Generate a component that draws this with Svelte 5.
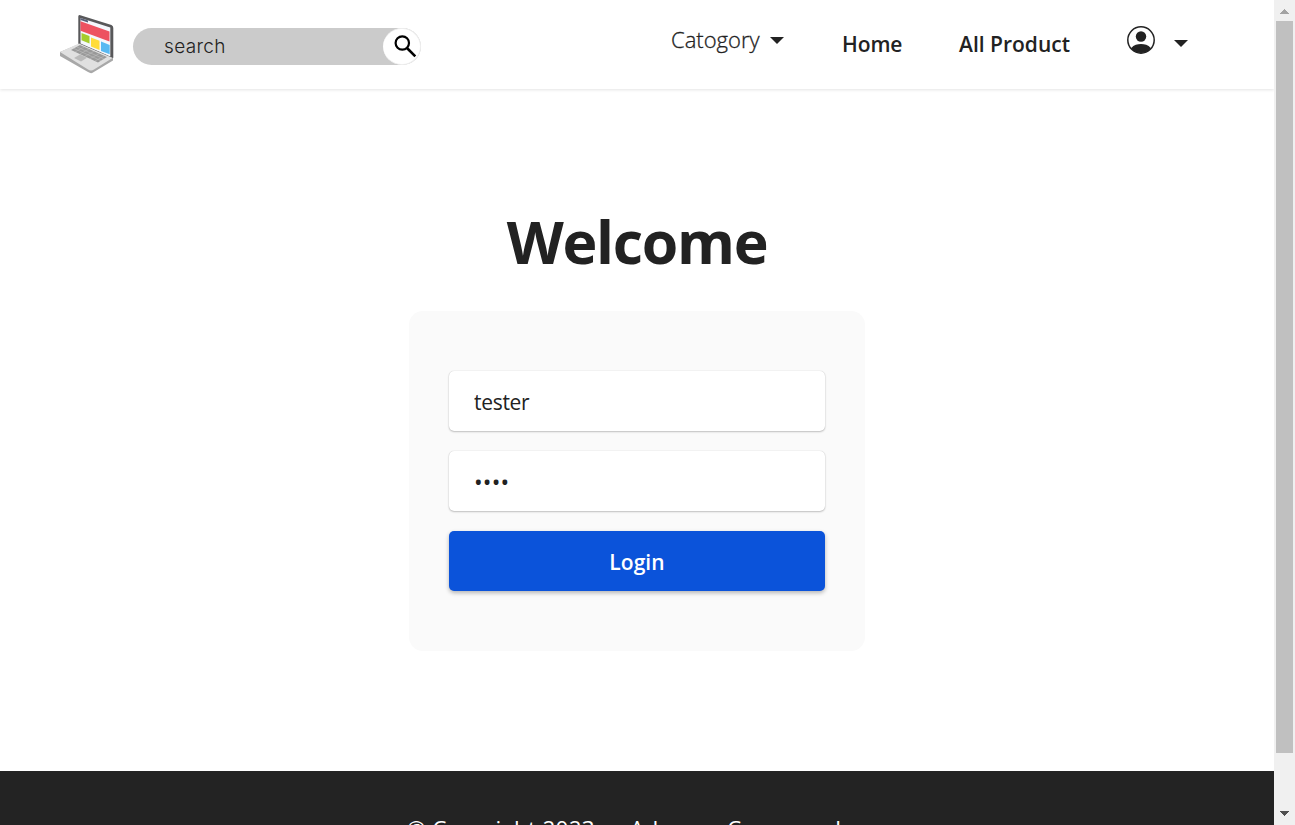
<script>
  let username = $state('tester');
  let password = $state('1234');
</script>

<div class="window">
  <div class="page">
    <header>
      <svg class="logo" viewBox="0 0 56 62" aria-label="Laptop">
        <path d="M18.3 2.5 Q18.3 .3 20.3 1.2 L51.5 11 Q53.3 12 53.3 14 L53.3 43.5 Q53 45.5 51 44.5 L18.3 31Z" fill="#58585a" />
        <path d="M20.5 4 L50.3 13.6 L50.3 42.5 L20.5 29.6Z" fill="#f4f7fc" />
        <path d="M20.5 4 L28 6.4 L28 8.5 L20.5 6Z" fill="#596078" />
        <path d="M20.5 7.2 L49.5 17.5 L49.5 27.5 L20.5 16.8Z" fill="#ed5260" />
        <path d="M21.5 19 L29.5 22 L29.5 29.5 L21.5 26.3Z" fill="#a5cd2d" />
        <path d="M31 23.5 L39.5 26.7 L39.5 36 L31 32.5Z" fill="#ffdc3b" />
        <path d="M41 27.6 L49.7 31 L49.7 40.3 L41 37Z" fill="#58b9f2" />
        <path d="M0 38 L19 30 L53 44 L53 46.5 L33 58.5 Q31 60 28 58 L0 42Z" fill="#a8a8a8" />
        <path d="M0 38 L19 29.5 L52.5 44 L34 55.5 Q31 57.5 28 55.5Z" fill="#e0e0e0" />
        <path d="M20 31 L47 43 L38 48.5 L11 36Z" fill="#999" />
        <path d="M17 33 L44 45 M14 34.5 L41 46.7 M24 33 L15 38 M29 35 L20 40 M34 37.3 L25 42.3 M39 39.7 L30 44.7 M44 42 L35 47" stroke="#c4c4c4" stroke-width=".5" />
        <path d="M20 40.5 L27 43.8 L21 47.5 L14 44Z" fill="#bababa" />
      </svg>
      <form class="search" onsubmit={(event) => event.preventDefault()}>
        <input placeholder="search" aria-label="search" />
        <button aria-label="Submit search">
          <svg viewBox="0 0 24 24" width="24" height="24" fill="none" stroke="#000" stroke-width="2.2">
            <circle cx="9.3" cy="9" r="6.7" /><path d="m14 14 8.3 8.3" stroke-width="2.6" />
          </svg>
        </button>
      </form>
      <nav>
        <a class="category" href="#category"><span>Catogory</span><i class="caret"></i></a>
        <a class="home" href="#home">Home</a>
        <a class="products" href="#products">All Product</a>
        <a class="account" href="#account" aria-label="Account">
          <svg viewBox="0 0 28 28" width="28" height="28">
            <circle cx="14" cy="14" r="13.2" fill="none" stroke="#222" stroke-width="1.5" />
            <circle cx="14" cy="10.5" r="5.2" fill="#222" />
            <path d="M4 22.2 C7 18.8 10.5 18 14 18 S21 18.8 24 22.2 A13 13 0 0 1 4 22.2Z" fill="#222" />
          </svg>
          <i class="caret"></i>
        </a>
      </nav>
    </header>
    <main>
      <h1>Welcome</h1>
      <form class="card" onsubmit={(event) => event.preventDefault()}>
        <input class="field" bind:value={username} aria-label="Username" />
        <input class="field password" type="password" bind:value={password} aria-label="Password" />
        <button class="login">Login</button>
      </form>
    </main>
    <footer><p>© Copyright 2023 — Advance Company Inc.</p></footer>
  </div>
  <aside class="scrollbar">
    <svg width="21" height="21" viewBox="0 0 21 21"><path d="M10 9h1v1h1v1h1v1h1v1h1v1H6v-1h1v-1h1v-1h1v-1h1z" fill="#a3a3a3" /></svg>
    <div class="thumb"></div>
    <svg class="down" width="21" height="21" viewBox="0 0 21 21"><path d="M6 7h9v1h-1v1h-1v1h-1v1h-1v1h-1v-1H9v-1H8V9H7V8H6z" fill="#505050" /></svg>
  </aside>
</div>

<style>
  :global(body) { margin: 0; overflow: hidden; }
  .window { display: flex; height: 825px; overflow: hidden; background: #fff; color: #222; font-family: "Open Sans", sans-serif; }
  * { box-sizing: border-box; }
  .page { width: 1274px; height: 825px; overflow: hidden; display: flex; flex-direction: column; }
  header { height: 89px; flex: none; display: flex; align-items: flex-start; padding-left: 60px; box-shadow: 0 1px 3px rgba(0, 0, 0, .11); }
  .logo { width: 56px; height: 62px; margin-top: 14px; }
  .search { width: 288px; height: 37px; margin: 28px 0 0 17px; display: flex; background: #cbcbcb; border-radius: 19px; }
  .search input { flex: 1; min-width: 0; padding: 0 0 1px 31px; border: 0; outline: 0; background: none; color: #222; font: 300 19px Inter, sans-serif; letter-spacing: .35px; }
  .search input::placeholder { color: #222; opacity: 1; }
  .search button { width: 38px; height: 37px; padding: 0 0 2px 6px; border: 1px solid #eee; border-left: 0; border-radius: 50%; background: #fff; display: grid; place-items: center; }
  nav { display: flex; margin-left: 250px; }
  a { color: #222; text-decoration: none; white-space: nowrap; }
  .caret { width: 0; height: 0; border: 7px solid transparent; border-top-color: #222; border-bottom: 0; }
  .category { width: 171px; height: 30px; margin-top: 25px; display: flex; align-items: center; gap: 10px; font-size: 22px; font-weight: 300; }
  .category span { width: 89px; padding-bottom: 3px; -webkit-text-stroke: .3px #222; }
  .home { width: 117px; margin-top: 29px; font-size: 21px; line-height: 30px; font-weight: 600; letter-spacing: -.1px; }
  .products { width: 168px; margin-top: 29px; font-size: 21px; line-height: 30px; font-weight: 600; }
  .account { display: flex; gap: 19px; margin-top: 26px; }
  .account .caret { margin-top: 14px; }
  main { height: 682px; flex: none; padding-top: 112px; display: flex; flex-direction: column; align-items: center; }
  h1 { height: 80px; margin: 0; font-size: 59px; line-height: 80px; font-weight: 700; letter-spacing: -1.3px; }
  .card { width: 456px; height: 340px; margin-top: 30px; padding: 60px 40px; display: flex; flex-direction: column; gap: 20px; background: #fafafa; border-radius: 14px; }
  .field { width: 376px; height: 60px; flex: none; padding: 2px 25px 0; border: 0; outline: 0; border-radius: 5px; background: #fff; box-shadow: 0 0 1px rgba(0, 0, 0, .22), 0 1px 2px rgba(0, 0, 0, .22); color: #222; font: 400 21px "Open Sans", sans-serif; letter-spacing: -.3px; }
  .password { font-size: 23px; letter-spacing: .2px; }
  .login { height: 60px; flex: none; border: 0; border-radius: 5px; background: #0b53da; box-shadow: 0 2px 4px rgba(0, 0, 0, .28); color: #fff; padding: 2px 0 0; font: 600 21px "Open Sans", sans-serif; letter-spacing: .1px; }
  footer { height: 54px; flex: none; background: #232323; color: #fff; overflow: hidden; }
  footer p { width: 470px; margin: 43px 0 0 407px; white-space: nowrap; font-size: 22.5px; line-height: 30px; letter-spacing: .28px; }
  .scrollbar { width: 21px; height: 825px; background: #f0f0f0; display: flex; flex-direction: column; align-items: center; }
  .thumb { width: 17px; height: 732px; background: #c0c0c0; }
  .down { margin-top: auto; }
  svg { flex: none; display: block; }
</style>
